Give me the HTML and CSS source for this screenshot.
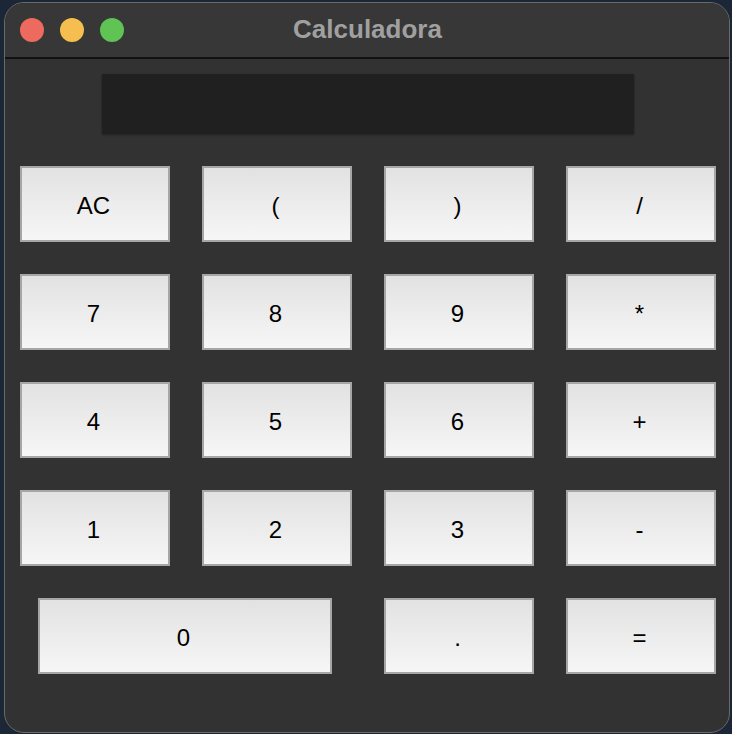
FILE: index.html
```html
<!DOCTYPE html>
<html>
<head>
<meta charset="utf-8">
<link rel="stylesheet" href="styles.css">
</head>
<body>
<div class="window">
  <div class="titlebar">
    <div class="lights">
      <span class="light red"></span>
      <span class="light yellow"></span>
      <span class="light green"></span>
    </div>
    <div class="title">Calculadora</div>
  </div>
  <div class="content">
    <div class="display"></div>
    <div class="keys">
      <button class="key">AC</button>
      <button class="key">(</button>
      <button class="key">)</button>
      <button class="key">/</button>
      <button class="key">7</button>
      <button class="key">8</button>
      <button class="key">9</button>
      <button class="key">*</button>
      <button class="key">4</button>
      <button class="key">5</button>
      <button class="key">6</button>
      <button class="key">+</button>
      <button class="key">1</button>
      <button class="key">2</button>
      <button class="key">3</button>
      <button class="key">-</button>
      <button class="key zero">0</button>
      <button class="key">.</button>
      <button class="key">=</button>
    </div>
  </div>
</div>
</body>
</html>
```
FILE: styles.css
```css
html, body {
  margin: 0;
  padding: 0;
  width: 732px;
  height: 734px;
  overflow: hidden;
  background: #1b2636;
}
body {
  padding: 2px 0 0 4px;
  box-sizing: border-box;
}
.window {
  width: 726px;
  height: 731px;
  box-sizing: border-box;
  border: 1px solid #6a6a6a;
  border-radius: 20px;
  background: #323232;
  overflow: hidden;
  display: flex;
  flex-direction: column;
}
.titlebar {
  height: 54px;
  flex: none;
  background: #373737;
  border-bottom: 2px solid #111;
  position: relative;
  display: flex;
  align-items: center;
  justify-content: center;
}
.lights {
  position: absolute;
  left: 15px;
  top: 15px;
  display: flex;
  gap: 16px;
}
.light {
  width: 24px;
  height: 24px;
  border-radius: 50%;
  display: block;
}
.red { background: #ee6a5e; }
.yellow { background: #f5be4f; }
.green { background: #5fc454; }
.title {
  font-family: "Liberation Sans", Arial, sans-serif;
  font-weight: bold;
  font-size: 26px;
  color: #a0a0a0;
  margin-top: -2px;
  margin-left: 1px;
}
.content {
  padding: 15px 11px 0 15px;
  display: flex;
  flex-direction: column;
}
.display {
  width: 532px;
  height: 60px;
  margin-left: 82px;
  background: #202020;
  box-shadow: 0 1px 2px rgba(0,0,0,0.35);
}
.keys {
  margin-top: 32px;
  display: grid;
  grid-template-columns: repeat(4, 150px);
  grid-auto-rows: 76px;
  column-gap: 32px;
  row-gap: 32px;
}
.key {
  box-sizing: border-box;
  border: 2px solid #a6a6a6;
  border-radius: 0;
  background: linear-gradient(#e2e2e2, #f6f6f6);
  font-family: "Liberation Sans", Arial, sans-serif;
  font-size: 24px;
  color: #000;
  padding: 4px 3px 0 0;
  margin: 0;
}
.zero {
  grid-column: span 2;
  margin: 0 20px 0 18px;
}
```
